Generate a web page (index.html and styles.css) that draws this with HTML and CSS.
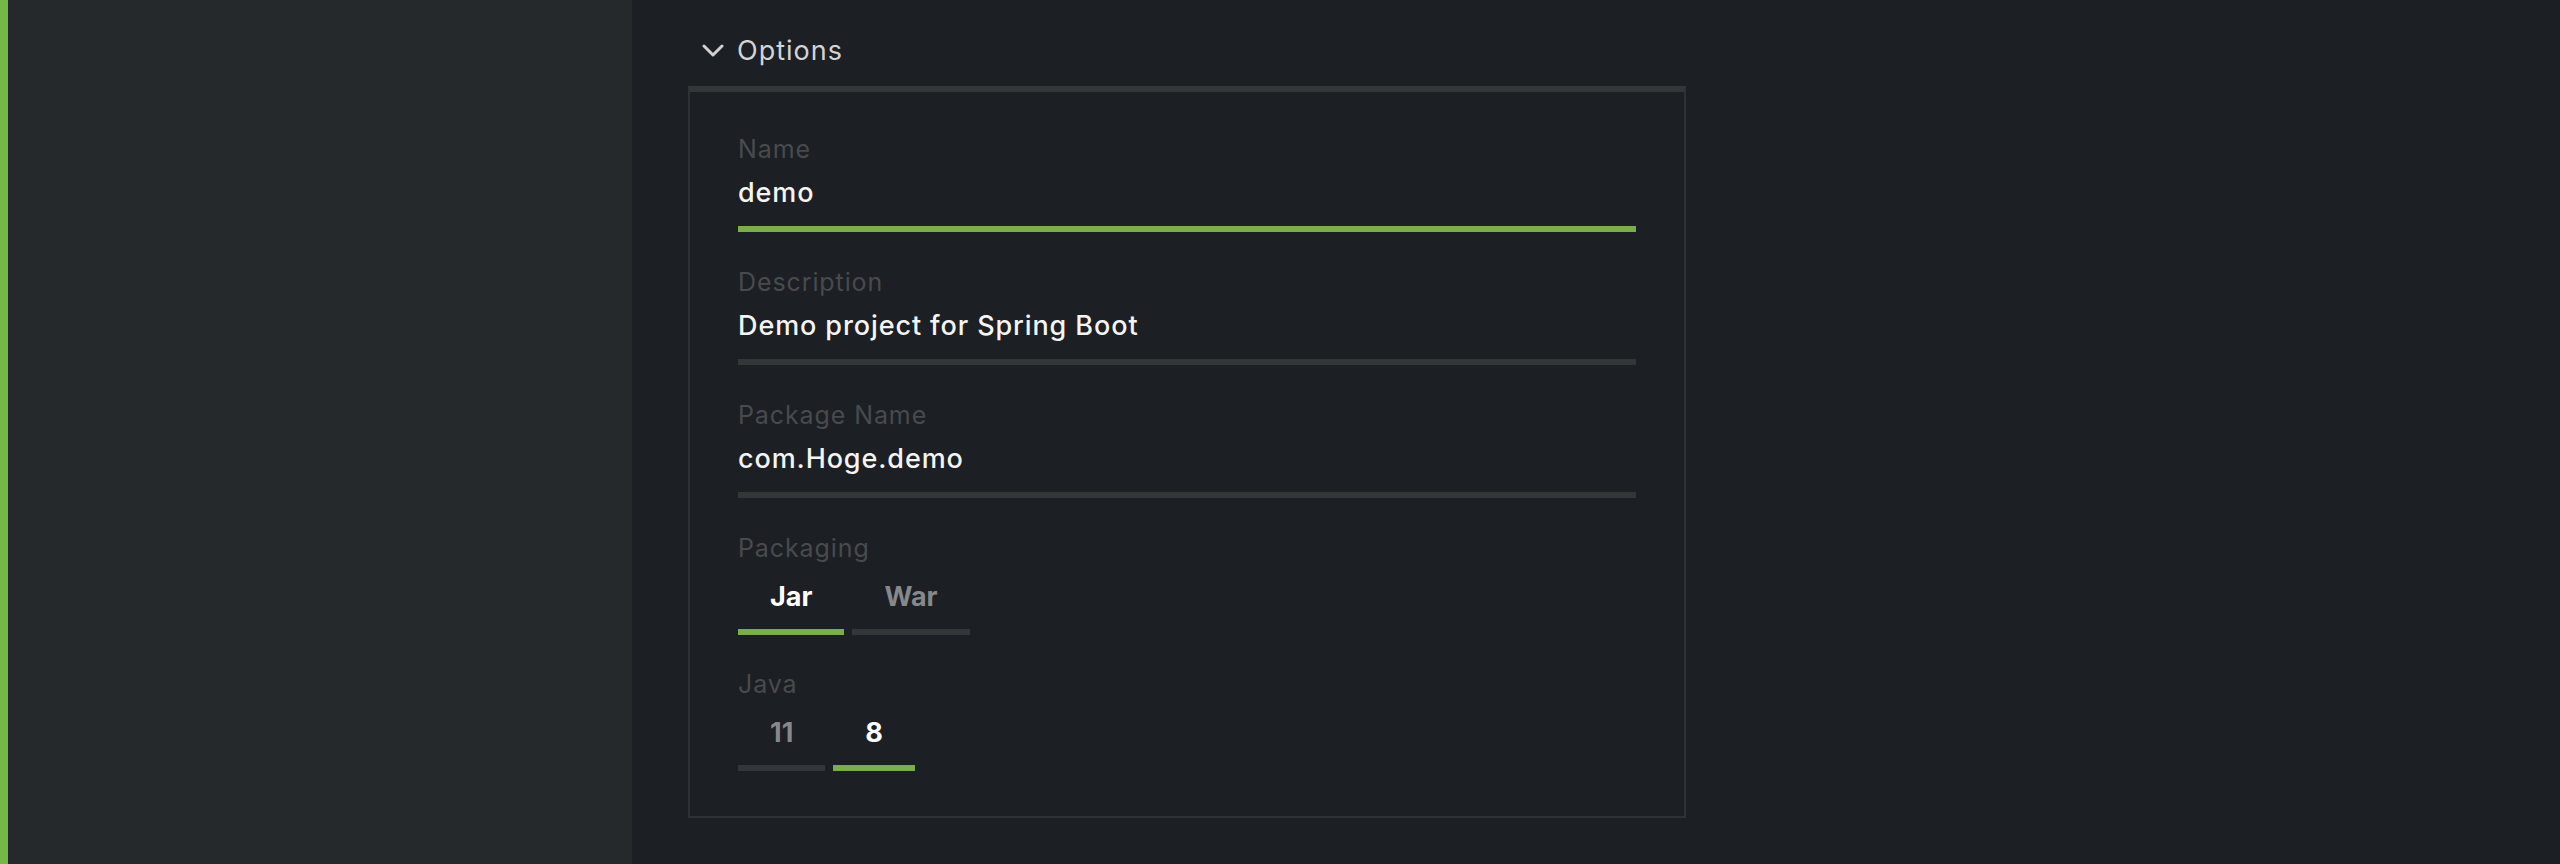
FILE: index.html
```html
<!DOCTYPE html>
<html lang="en">
<head>
<meta charset="utf-8">
<title>Options</title>
<link rel="stylesheet" href="styles.css">
</head>
<body>
<div class="app">
  <aside class="sidebar"></aside>
  <main class="main">
    <div class="section-head">
      <svg class="chevron" width="22" height="14" viewBox="0 0 22 14"><polyline points="2,2 11,11 20,2" fill="none" stroke="#d0d1d2" stroke-width="3" stroke-linecap="round" stroke-linejoin="round"/></svg>
      <span class="section-title">Options</span>
    </div>
    <div class="panel">
      <div class="field">
        <div class="label">Name</div>
        <div class="value">demo</div>
        <div class="line active"></div>
      </div>
      <div class="field">
        <div class="label">Description</div>
        <div class="value">Demo project for Spring Boot</div>
        <div class="line"></div>
      </div>
      <div class="field">
        <div class="label">Package Name</div>
        <div class="value">com.Hoge.demo</div>
        <div class="line"></div>
      </div>
      <div class="field choice">
        <div class="label">Packaging</div>
        <div class="radios">
          <div class="radio selected">Jar</div>
          <div class="radio">War</div>
        </div>
      </div>
      <div class="field choice last">
        <div class="label">Java</div>
        <div class="radios">
          <div class="radio">11</div>
          <div class="radio selected">8</div>
        </div>
      </div>
    </div>
  </main>
</div>
</body>
</html>
```
FILE: styles.css
```css
html, body {
  margin: 0;
  padding: 0;
  height: 100%;
}
body {
  background: #1c1f23;
  font-family: Inter, "Liberation Sans", sans-serif;
  color: #f2f2f2;
  overflow: hidden;
}
.app {
  display: flex;
  height: 864px;
}
.sidebar {
  width: 624px;
  flex: none;
  background: #25292c;
  border-left: 8px solid #74b845;
}
.main {
  flex: 1;
  padding-left: 56px;
  padding-top: 29px;
}
.section-head {
  display: flex;
  align-items: center;
  height: 43px;
  padding-left: 14px;
  margin-bottom: 14px;
}
.chevron {
  display: block;
  margin-right: 13px;
}
.section-title {
  font-size: 27px;
  letter-spacing: 1px;
  color: #d3d4d5;
  line-height: 43px;
}
.panel {
  width: 998px;
  box-sizing: border-box;
  border: 2px solid #2e3235;
  border-top: 6px solid #33373a;
  padding: 42px 48px 45px 48px;
}
.field {
  display: flex;
  flex-direction: column;
  margin-bottom: 35px;
}
.field.choice {
  margin-bottom: 34px;
}
.field.last {
  margin-bottom: 0;
}
.label {
  font-size: 25px;
  letter-spacing: 0.9px;
  line-height: 30px;
  height: 30px;
  color: #474b4e;
}
.value {
  font-size: 27px;
  font-weight: 500;
  letter-spacing: 0.9px;
  line-height: 33px;
  margin-top: 12px;
  color: #f4f4f4;
}
.line {
  height: 6px;
  margin-top: 17px;
  background: #33373a;
}
.line.active {
  background: #7aad4c;
}
.radios {
  display: flex;
  gap: 8px;
  margin-top: 17px;
}
.radio {
  font-size: 27px;
  font-weight: 700;
  line-height: 33px;
  padding: 0 32px 16px 32px;
  border-bottom: 6px solid #33373a;
  color: #86888a;
}
.radio.selected {
  color: #ffffff;
  border-bottom-color: #7aad4c;
}
```
